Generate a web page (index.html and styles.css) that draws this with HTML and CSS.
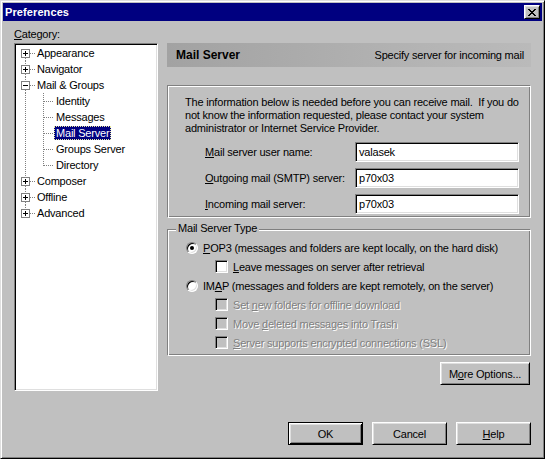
FILE: index.html
```html
<!DOCTYPE html>
<html>
<head>
<meta charset="utf-8">
<title>Preferences</title>
<link rel="stylesheet" href="styles.css">
</head>
<body>
<div class="window">
  <div class="titlebar">
    <span class="title">Preferences</span>
    <button class="close"><svg width="8" height="7" viewBox="0 0 8 7"><path d="M0 0h2v1H0zM6 0h2v1H6zM1 1h2v1H1zM5 1h2v1H5zM2 2h4v1H2zM3 3h2v1H3zM2 4h4v1H2zM1 5h2v1H1zM5 5h2v1H5zM0 6h2v1H0zM6 6h2v1H6z" fill="#000"/></svg></button>
  </div>
  <div class="main">
    <div class="cat-label"><u>C</u>ategory:</div>
    <div class="tree">
      <div class="row">
        <svg class="g" width="19" height="16"><path class="dot" d="M9.5 13V16M14 8.5H19"/><rect class="exp" x="5.5" y="4.5" width="8" height="8"/><path class="sign" d="M7 8.5h5M9.5 6v5"/></svg>
        <span class="lbl">Appearance</span>
      </div>
      <div class="row">
        <svg class="g" width="19" height="16"><path class="dot" d="M9.5 0V4M9.5 13V16M14 8.5H19"/><rect class="exp" x="5.5" y="4.5" width="8" height="8"/><path class="sign" d="M7 8.5h5M9.5 6v5"/></svg>
        <span class="lbl">Navigator</span>
      </div>
      <div class="row">
        <svg class="g" width="19" height="16"><path class="dot" d="M9.5 0V4M9.5 13V16M14 8.5H19"/><rect class="exp" x="5.5" y="4.5" width="8" height="8"/><path class="sign" d="M7 8.5h5"/></svg>
        <span class="lbl">Mail &amp; Groups</span>
      </div>
      <div class="row">
        <svg class="g" width="19" height="16"><path class="dot" d="M9.5 0V16"/></svg>
        <svg class="g2" width="18" height="16"><path class="dot" d="M8.5 0V16M9 8.5H18"/></svg>
        <span class="lbl child">Identity</span>
      </div>
      <div class="row">
        <svg class="g" width="19" height="16"><path class="dot" d="M9.5 0V16"/></svg>
        <svg class="g2" width="18" height="16"><path class="dot" d="M8.5 0V16M9 8.5H18"/></svg>
        <span class="lbl child">Messages</span>
      </div>
      <div class="row">
        <svg class="g" width="19" height="16"><path class="dot" d="M9.5 0V16"/></svg>
        <svg class="g2" width="18" height="16"><path class="dot" d="M8.5 0V16M9 8.5H18"/></svg>
        <span class="lbl child selected">Mail Server</span>
      </div>
      <div class="row">
        <svg class="g" width="19" height="16"><path class="dot" d="M9.5 0V16"/></svg>
        <svg class="g2" width="18" height="16"><path class="dot" d="M8.5 0V16M9 8.5H18"/></svg>
        <span class="lbl child">Groups Server</span>
      </div>
      <div class="row">
        <svg class="g" width="19" height="16"><path class="dot" d="M9.5 0V16"/></svg>
        <svg class="g2" width="18" height="16"><path class="dot" d="M8.5 0V9M9 8.5H18"/></svg>
        <span class="lbl child">Directory</span>
      </div>
      <div class="row">
        <svg class="g" width="19" height="16"><path class="dot" d="M9.5 0V4M9.5 13V16M14 8.5H19"/><rect class="exp" x="5.5" y="4.5" width="8" height="8"/><path class="sign" d="M7 8.5h5M9.5 6v5"/></svg>
        <span class="lbl">Composer</span>
      </div>
      <div class="row">
        <svg class="g" width="19" height="16"><path class="dot" d="M9.5 0V4M9.5 13V16M14 8.5H19"/><rect class="exp" x="5.5" y="4.5" width="8" height="8"/><path class="sign" d="M7 8.5h5M9.5 6v5"/></svg>
        <span class="lbl">Offline</span>
      </div>
      <div class="row">
        <svg class="g" width="19" height="16"><path class="dot" d="M9.5 0V4M14 8.5H19"/><rect class="exp" x="5.5" y="4.5" width="8" height="8"/><path class="sign" d="M7 8.5h5M9.5 6v5"/></svg>
        <span class="lbl">Advanced</span>
      </div>
    </div>

    <div class="right">
      <div class="header">
        <span class="h-title">Mail Server</span>
        <span class="h-desc">Specify server for incoming mail</span>
      </div>
      <div class="etched info">
        <p class="intro">The information below is needed before you can receive mail.&nbsp; If you do<br>not know the information requested, please contact your system<br>administrator or Internet Service Provider.</p>
        <div class="fields">
          <span class="flabel"><u>M</u>ail server user name:</span><div class="input">valasek</div>
          <span class="flabel"><u>O</u>utgoing mail (SMTP) server:</span><div class="input">p70x03</div>
          <span class="flabel"><u>I</u>ncoming mail server:</span><div class="input">p70x03</div>
        </div>
      </div>
      <div class="etched group">
        <div class="legend">Mail Server Type</div>
        <div class="opt"><span class="radio checked"></span><span><u>P</u>OP3 (messages and folders are kept locally, on the hard disk)</span></div>
        <div class="opt sub"><span class="check"></span><span><u>L</u>eave messages on server after retrieval</span></div>
        <div class="opt"><span class="radio"></span><span>IM<u>A</u>P (messages and folders are kept remotely, on the server)</span></div>
        <div class="opt sub disabled"><span class="check"></span><span>Set <u>n</u>ew folders for offline download</span></div>
        <div class="opt sub disabled"><span class="check"></span><span>Move <u>d</u>eleted messages into Trash</span></div>
        <div class="opt sub disabled"><span class="check"></span><span><u>S</u>erver supports encrypted connections (SSL)</span></div>
      </div>
      <div class="more-row"><button class="btn more">M<u>o</u>re Options...</button></div>
    </div>

    <div class="buttons">
      <button class="btn default">OK</button>
      <button class="btn">Cancel</button>
      <button class="btn"><u>H</u>elp</button>
    </div>
  </div>
</div>
</body>
</html>
```
FILE: styles.css
```css
* { box-sizing: border-box; }
html, body { margin: 0; padding: 0; }
body {
  width: 545px;
  height: 459px;
  overflow: hidden;
  background: #c0c0c0;
  font-family: "Liberation Sans", Arial, sans-serif;
  font-size: 11px;
  letter-spacing: -0.2px;
  color: #000;
}
u { text-decoration: underline; text-underline-offset: 1px; }

.window {
  width: 545px;
  height: 459px;
  border: 1px solid;
  border-color: #dfdfdf #000 #000 #dfdfdf;
  box-shadow: inset 1px 1px #fff, inset -1px -1px #808080;
  padding: 2px;
  display: flex;
  flex-direction: column;
  background: #c0c0c0;
}

.titlebar {
  height: 18px;
  background: #000080;
  display: flex;
  align-items: center;
  justify-content: space-between;
  padding: 0 2px;
}
.title { color: #fff; font-weight: bold; font-size: 11px; letter-spacing: 0.1px; }
.close {
  width: 16px;
  height: 14px;
  padding: 0;
  display: flex;
  align-items: center;
  justify-content: center;
  background: #c0c0c0;
  border: 1px solid;
  border-color: #fff #000 #000 #fff;
  box-shadow: inset 1px 1px #dfdfdf, inset -1px -1px #808080;
}
.close svg { display: block; margin-left: -1px; }

.main {
  flex: 1;
  display: grid;
  grid-template-columns: 144px 364px;
  grid-template-rows: 16px 348px auto;
  column-gap: 9px;
  padding: 6px 11px 0 11px;
}
.cat-label { grid-column: 1; grid-row: 1; line-height: 14px; }

.tree {
  grid-column: 1;
  grid-row: 2;
  background: #fff;
  border: 1px solid;
  border-color: #808080 #fff #fff #808080;
  box-shadow: inset 1px 1px #000, inset -1px -1px #dfdfdf;
  padding: 1px;
}
.row { display: flex; align-items: center; height: 16px; }
.row svg { display: block; flex: none; }
.dot { stroke: #808080; stroke-dasharray: 1 1; fill: none; shape-rendering: crispEdges; }
.exp { stroke: #808080; fill: #fff; shape-rendering: crispEdges; }
.sign { stroke: #000; fill: none; shape-rendering: crispEdges; }
.lbl { height: 14px; line-height: 14px; padding: 0 2px; white-space: nowrap; }
.lbl.child { margin-left: 1px; }
.lbl.selected {
  background: #000080;
  color: #fff;
  outline: 1px dotted #e8e8a0;
  outline-offset: -1px;
}

.right { grid-column: 2; grid-row: 2; display: flex; flex-direction: column; }
.header {
  height: 24px;
  display: flex;
  align-items: center;
  justify-content: space-between;
  padding: 0 7px 0 9px;
  background: linear-gradient(to right, #a2a2a2, #b4b4b4 70%, #bababa);
}
.h-title { font-weight: bold; font-size: 12px; letter-spacing: 0; }

.etched {
  border: 1px solid;
  border-color: #808080 #fff #fff #808080;
  box-shadow: inset 1px 1px #fff, inset -1px -1px #808080;
}
.info {
  margin-top: 18px;
  height: 133px;
  padding: 10px 0 0 17px;
}
.intro { margin: 0; line-height: 13px; white-space: nowrap; }
.fields {
  display: grid;
  grid-template-columns: 150px 164px;
  row-gap: 6px;
  margin: 7px 0 0 20px;
  align-items: center;
}
.flabel { white-space: nowrap; }
.input {
  height: 20px;
  line-height: 18px;
  padding-left: 3px;
  background: #fff;
  border: 1px solid;
  border-color: #808080 #fff #fff #808080;
  box-shadow: inset 1px 1px #000, inset -1px -1px #dfdfdf;
}

.group {
  margin-top: 11px;
  padding: 0 0 3px 0;
  display: flex;
  flex-direction: column;
}
.legend {
  align-self: flex-start;
  margin: -8px 0 3px 8px;
  padding: 0 2px;
  height: 13px;
  line-height: 13px;
  background: #c0c0c0;
}
.opt {
  display: flex;
  align-items: center;
  height: 19px;
  padding-left: 18px;
  gap: 5px;
  white-space: nowrap;
}
.opt.sub { padding-left: 47px; }
.radio {
  width: 12px;
  height: 12px;
  flex: none;
  border-radius: 50%;
  border: 1px solid;
  border-color: #808080 #fff #fff #808080;
  box-shadow: inset 1px 1px #000, inset -1px -1px #dfdfdf;
  background: #fff;
  display: flex;
  align-items: center;
  justify-content: center;
}
.radio.checked::after {
  content: "";
  width: 4px;
  height: 4px;
  border-radius: 50%;
  background: #000;
}
.check {
  width: 13px;
  height: 13px;
  flex: none;
  background: #fff;
  border: 1px solid;
  border-color: #808080 #fff #fff #808080;
  box-shadow: inset 1px 1px #000, inset -1px -1px #dfdfdf;
}
.disabled { color: #808080; text-shadow: 1px 1px 0 #fff; }
.disabled .check { background: #c0c0c0; }

.more-row { display: flex; justify-content: flex-end; margin-top: 6px; padding-right: 1px; }

.btn {
  height: 23px;
  width: 75px;
  padding: 0;
  font: inherit;
  letter-spacing: inherit;
  color: #000;
  background: #c0c0c0;
  border: 1px solid;
  border-color: #fff #000 #000 #fff;
  box-shadow: inset 1px 1px #dfdfdf, inset -1px -1px #808080;
}
.btn.more { width: 90px; }
.btn.default {
  border: 1px solid #000;
  box-shadow: inset 1px 1px #fff, inset -1px -1px #000, inset 2px 2px #dfdfdf, inset -2px -2px #808080;
}

.buttons {
  grid-column: 1 / -1;
  grid-row: 3;
  display: flex;
  justify-content: flex-end;
  gap: 9px;
  margin-top: 31px;
}
```
